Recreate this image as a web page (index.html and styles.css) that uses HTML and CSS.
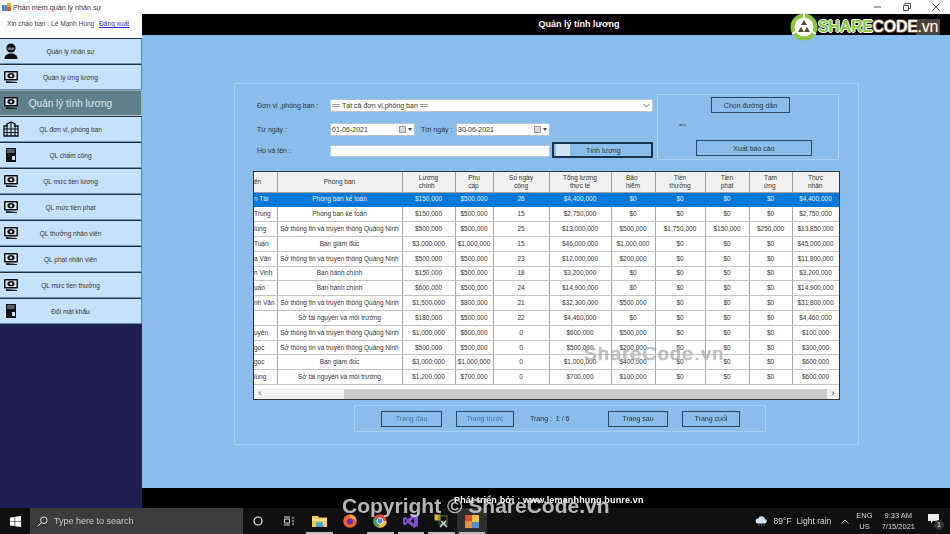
FILE: index.html
```html
<!DOCTYPE html>
<html lang="en">
<head>
    <meta charset="UTF-8">
    <meta name="viewport" content="width=device-width, initial-scale=1.0">
    <title>Phần mềm quản lý nhân sự</title>
    <link rel="stylesheet" href="styles.css">
</head>
<body>
    <svg class="defs" width="0" height="0">
        <symbol id="i-money" viewBox="0 0 16 14">
            <path d="M3 11v2h11v-1z" fill="#222"/>
            <rect x="1" y="1" width="14" height="9.5" rx="1" fill="#111"/>
            <rect x="2.5" y="2.5" width="11" height="6.5" fill="#dfeaf5"/>
            <ellipse cx="8" cy="5.7" rx="3.6" ry="2.6" fill="#111"/>
            <circle cx="8" cy="5.7" r="1.2" fill="#dfeaf5"/>
        </symbol>
        <symbol id="i-person" viewBox="0 0 16 16">
            <circle cx="8" cy="5" r="4.6" fill="#111"/>
            <path d="M4.5 4.5h7v1.6c-1 1.6-6 1.6-7 0z" fill="#c5e0ff" opacity=".5"/>
            <path d="M1.5 16c0-4 3-5.500 6.500-5.500s6.500 1.500 6.500 5.500z" fill="#111"/>
        </symbol>
        <symbol id="i-building" viewBox="0 0 16 16">
            <path d="M1 5h3V3l4-2 4 2v2h3v10H1z" fill="none" stroke="#111" stroke-width="1.300"/>
            <path d="M4 3.500V15M12 3.500V15M1 8h14M1 11.500h14M8 1v14" stroke="#111" stroke-width="1.100"/>
        </symbol>
        <symbol id="i-book" viewBox="0 0 16 16">
            <path d="M3 1h10v14H3z" fill="#111"/>
            <path d="M4 3h7.500M4 5h7.500" stroke="#c5e0ff" stroke-width=".8"/>
            <rect x="9" y="9" width="3" height="4" fill="#c5e0ff"/>
        </symbol>
    </svg>

    <div class="titlebar">
        <svg class="app-icon" width="10" height="10" viewBox="0 0 10 10">
            <rect x="0" y="3" width="5" height="6" fill="#4f8fd0"/>
            <rect x="5" y="1" width="4" height="4" fill="#e9b23c"/>
            <rect x="5" y="5" width="4" height="4" fill="#d9573c"/>
        </svg>
        <span class="app-name">Phần mềm quản lý nhân sự</span>
        <div class="win-controls">
            <span class="win-btn">
                <svg width="8" height="8" viewBox="0 0 8 8"><path d="M0 4h7" stroke="#555"/></svg>
            </span>
            <span class="win-btn">
                <svg width="8" height="8" viewBox="0 0 8 8"><path d="M.5 2.500h5v5h-5zM2 2.500V.5h5.500v5H5.500" fill="none" stroke="#555"/></svg>
            </span>
            <span class="win-btn">
                <svg width="8" height="8" viewBox="0 0 8 8"><path d="M.5.5l7 7M7.500.5l-7 7" stroke="#555"/></svg>
            </span>
        </div>
    </div>

    <div class="app">
        <aside class="sidebar">
            <div class="greeting">Xin chào bạn : Lê Mạnh Hùng <a class="logout">Đăng xuất</a></div>
            <div class="menu-item"><svg class="menu-icon"><use href="#i-person"/></svg><span>Quản lý nhân sự</span></div>
            <div class="menu-item"><svg class="menu-icon"><use href="#i-money"/></svg><span>Quản lý ứng lương</span></div>
            <div class="menu-item active"><svg class="menu-icon"><use href="#i-money"/></svg><span>Quản lý tính lương</span></div>
            <div class="menu-item"><svg class="menu-icon"><use href="#i-building"/></svg><span>QL đơn vị, phòng ban</span></div>
            <div class="menu-item"><svg class="menu-icon"><use href="#i-book"/></svg><span>QL chấm công</span></div>
            <div class="menu-item"><svg class="menu-icon"><use href="#i-money"/></svg><span>QL mức tiền lương</span></div>
            <div class="menu-item"><svg class="menu-icon"><use href="#i-money"/></svg><span>QL mức tiền phạt</span></div>
            <div class="menu-item"><svg class="menu-icon"><use href="#i-money"/></svg><span>QL thưởng nhân viên</span></div>
            <div class="menu-item"><svg class="menu-icon"><use href="#i-money"/></svg><span>QL phạt nhân viên</span></div>
            <div class="menu-item"><svg class="menu-icon"><use href="#i-money"/></svg><span>QL mức tiền thưởng</span></div>
            <div class="menu-item"><svg class="menu-icon"><use href="#i-book"/></svg><span>Đổi mật khẩu</span></div>
        </aside>

        <main class="main">
            <div class="main-header">Quản lý tính lương</div>
            <div class="content">
                <section class="panel">
                    <div class="top">
                        <div class="filters">
                            <div class="row row-unit">
                                <label class="lbl">Đơn vị ,phòng ban :</label>
                                <div class="field field-unit">== Tất cả đơn vị,phòng ban ==
                                    <svg class="chev" width="7" height="5" viewBox="0 0 7 5"><path d="M.5 1l3 3 3-3" fill="none" stroke="#666"/></svg>
                                </div>
                            </div>
                            <div class="row row-date">
                                <label class="lbl">Từ ngày :</label>
                                <div class="field field-date from">01-06-2021<span class="cal"></span><span class="caret"></span></div>
                                <label class="lbl lbl-to">Tới ngày :</label>
                                <div class="field field-date to">30-06-2021<span class="cal"></span><span class="caret"></span></div>
                            </div>
                            <div class="row row-name">
                                <label class="lbl">Họ và tên :</label>
                                <div class="field field-name"></div>
                                <button class="btn btn-calc"><span class="btn-img"></span><span class="btn-text">Tính lương</span></button>
                            </div>
                        </div>
                        <div class="export">
                            <button class="btn btn-path">Chọn đường dẫn</button>
                            <div class="arrow">=&gt;</div>
                            <button class="btn btn-export">Xuất báo cáo</button>
                        </div>
                    </div>

                    <div class="grid-wrap">
                        <table class="grid">
                            <colgroup>
                                <col class="c1"><col class="c2"><col class="c3"><col class="c4"><col class="c5"><col class="c6">
                                <col class="c7"><col class="c8"><col class="c9"><col class="c10"><col class="c11">
                            </colgroup>
                            <thead>
                                <tr>
                                    <th class="name">ên</th>
                                    <th>Phòng ban</th>
                                    <th><span class="hl">Lương<br>chính</span></th>
                                    <th><span class="hl">Phụ<br>cấp</span></th>
                                    <th>Số ngày<br>công</th>
                                    <th>Tổng lương<br>thực tế</th>
                                    <th><span class="hl">Bảo<br>hiểm</span></th>
                                    <th>Tiền<br>thưởng</th>
                                    <th><span class="hl">Tiền<br>phạt</span></th>
                                    <th><span class="hl">Tạm<br>ứng</span></th>
                                    <th><span class="hl">Thực<br>nhận</span></th>
                                </tr>
                            </thead>
                            <tbody>
                                <tr class="selected"><td class="name">n Tài</td><td>Phòng ban kế toán</td><td>$150,000</td><td>$500,000</td><td>26</td><td>$4,400,000</td><td>$0</td><td>$0</td><td>$0</td><td>$0</td><td>$4,400,000</td></tr>
                                <tr><td class="name">Trung</td><td>Phòng ban kế toán</td><td>$150,000</td><td>$500,000</td><td>15</td><td>$2,750,000</td><td>$0</td><td>$0</td><td>$0</td><td>$0</td><td>$2,750,000</td></tr>
                                <tr><td class="name">lùng</td><td>Sở thông tin và truyền thông Quảng Ninh</td><td>$500,000</td><td>$500,000</td><td>25</td><td>$13,000,000</td><td>$500,000</td><td>$1,750,000</td><td>$150,000</td><td>$250,000</td><td>$13,850,000</td></tr>
                                <tr><td class="name">Tuấn</td><td>Ban giám đốc</td><td>$3,000,000</td><td>$1,000,000</td><td>15</td><td>$46,000,000</td><td>$1,000,000</td><td>$0</td><td>$0</td><td>$0</td><td>$45,000,000</td></tr>
                                <tr><td class="name">a Văn</td><td>Sở thông tin và truyền thông Quảng Ninh</td><td>$500,000</td><td>$500,000</td><td>23</td><td>$12,000,000</td><td>$200,000</td><td>$0</td><td>$0</td><td>$0</td><td>$11,800,000</td></tr>
                                <tr><td class="name">n Vinh</td><td>Ban hành chính</td><td>$150,000</td><td>$500,000</td><td>18</td><td>$3,200,000</td><td>$0</td><td>$0</td><td>$0</td><td>$0</td><td>$3,200,000</td></tr>
                                <tr><td class="name">uấn</td><td>Ban hành chính</td><td>$600,000</td><td>$500,000</td><td>24</td><td>$14,900,000</td><td>$0</td><td>$0</td><td>$0</td><td>$0</td><td>$14,900,000</td></tr>
                                <tr><td class="name">nh Văn</td><td>Sở thông tin và truyền thông Quảng Ninh</td><td>$1,500,000</td><td>$800,000</td><td>21</td><td>$32,300,000</td><td>$500,000</td><td>$0</td><td>$0</td><td>$0</td><td>$31,800,000</td></tr>
                                <tr><td class="name"></td><td>Sở tài nguyên và môi trường</td><td>$180,000</td><td>$500,000</td><td>22</td><td>$4,460,000</td><td>$0</td><td>$0</td><td>$0</td><td>$0</td><td>$4,460,000</td></tr>
                                <tr><td class="name">uyên</td><td>Sở thông tin và truyền thông Quảng Ninh</td><td>$1,000,000</td><td>$600,000</td><td>0</td><td>$600,000</td><td>$500,000</td><td>$0</td><td>$0</td><td>$0</td><td>$100,000</td></tr>
                                <tr><td class="name">gọc</td><td>Sở thông tin và truyền thông Quảng Ninh</td><td>$500,000</td><td>$500,000</td><td>0</td><td>$500,000</td><td>$200,000</td><td>$0</td><td>$0</td><td>$0</td><td>$300,000</td></tr>
                                <tr><td class="name">gọc</td><td>Ban giám đốc</td><td>$3,000,000</td><td>$1,000,000</td><td>0</td><td>$1,000,000</td><td>$400,000</td><td>$0</td><td>$0</td><td>$0</td><td>$600,000</td></tr>
                                <tr><td class="name">lùng</td><td>Sở tài nguyên và môi trường</td><td>$1,200,000</td><td>$700,000</td><td>0</td><td>$700,000</td><td>$100,000</td><td>$0</td><td>$0</td><td>$0</td><td>$600,000</td></tr>
                            </tbody>
                        </table>
                        <div class="hscroll">
                            <span class="sb-arrow">&lsaquo;</span>
                            <span class="sb-gap"></span>
                            <span class="sb-thumb"></span>
                            <span class="sb-arrow">&rsaquo;</span>
                        </div>
                    </div>

                    <div class="pager">
                        <button class="btn pg pg-first muted">Trang đầu</button>
                        <button class="btn pg pg-prev muted">Trang trước</button>
                        <span class="pg-info">Trang :&nbsp; 1 / 6</span>
                        <button class="btn pg pg-next">Trang sau</button>
                        <button class="btn pg pg-last">Trang cuối</button>
                    </div>
                </section>
            </div>
            <div class="main-footer">Phát triển bởi : www.lemanhhung.bunre.vn</div>
        </main>
    </div>

    <footer class="taskbar">
        <span class="tb-start">
            <svg width="11" height="11" viewBox="0 0 11 11"><path d="M0 1.600l4.600-.7v4.300H0zM5.200.8L11 0v5.200H5.200zM0 5.800h4.600v4.300L0 9.400zM5.200 5.800H11V11l-5.800-.8z" fill="#fff"/></svg>
        </span>
        <div class="tb-search">
            <svg width="11" height="11" viewBox="0 0 11 11"><circle cx="6.800" cy="4.200" r="3.300" fill="none" stroke="#ddd"/><path d="M4.400 6.600L.8 10.200" stroke="#ddd"/></svg>
            <span>Type here to search</span>
        </div>
        <span class="tb-slot cortana">
            <svg width="10" height="10" viewBox="0 0 10 10"><circle cx="5" cy="5" r="4" fill="none" stroke="#eee" stroke-width="1.200"/></svg>
        </span>
        <span class="tb-slot taskview">
            <svg width="12" height="10" viewBox="0 0 12 10"><path d="M1 1h6M1 9h6M1.500 3h5v4h-5zM10 1v2M10 4v2M10 7v2" fill="none" stroke="#ddd"/></svg>
        </span>
        <span class="tb-slot open explorer">
            <svg width="15" height="12" viewBox="0 0 15 12"><path d="M0 1h6l1 1.500h8V12H0z" fill="#f3c95b"/><path d="M0 4h15v2H0z" fill="#fbe59a"/><path d="M4 7h7v5H4z" fill="#4aa3c9"/></svg>
        </span>
        <span class="tb-slot firefox">
            <svg width="14" height="14" viewBox="0 0 14 14"><circle cx="7" cy="7" r="6.800" fill="#f0642d"/><path d="M7 1c4 0 6.500 3 6 6.500C12 4.500 9 3.500 7 4z" fill="#ffb52e"/><circle cx="7" cy="7.500" r="3.100" fill="#6a2bb8"/></svg>
        </span>
        <span class="tb-slot open chrome">
            <svg width="14" height="14" viewBox="0 0 14 14"><circle cx="7" cy="7" r="6.800" fill="#d8493b"/><path d="M7 7L1 3.600A7 7 0 0 0 6 13.800z" fill="#3ba858"/><path d="M7 7h6.800A7 7 0 0 1 6 13.800z" fill="#f4c430"/><circle cx="7" cy="7" r="3" fill="#4285f4" stroke="#eee"/></svg>
        </span>
        <span class="tb-slot open vs">
            <svg width="15" height="14" viewBox="0 0 15 14"><path d="M11 0l4 2v10l-4 2-6-5-3 2.400L0 10V4l2-1.400L5 5zM11 4.500L7.500 7l3.500 2.500zM2 5.300v3.400L3.700 7z" fill="#7a4fc9"/></svg>
        </span>
        <span class="tb-slot open tools">
            <svg width="15" height="14" viewBox="0 0 15 14"><rect x=".5" y=".5" width="6" height="6" fill="#d9b53c"/><rect x="5" y="2" width="8" height="8" fill="none" stroke="#3f7d3f"/><path d="M6 13l6-6M7 7l6 6" stroke="#ddd" stroke-width="1.600"/></svg>
        </span>
        <span class="tb-slot open current app-btn">
            <svg width="14" height="13" viewBox="0 0 14 13"><rect width="7" height="6" fill="#d6503c"/><rect x="7" width="7" height="7" fill="#f3c23c"/><rect y="6" width="7" height="7" fill="#e9913c"/><rect x="7" y="7" width="7" height="6" fill="#4f8fd0"/></svg>
        </span>
        <div class="tray">
            <svg class="weather-icon" width="13" height="10" viewBox="0 0 13 10"><path d="M3 7.500a2.500 2.500 0 0 1 .3-5A3.500 3.500 0 0 1 10 3a2.300 2.300 0 0 1 0 4.500z" fill="#cfe6f7"/><path d="M4 8.500v1M6.500 8.500v1M9 8.500v1" stroke="#6fb3e8"/></svg>
            <span class="weather">89°F&nbsp; Light rain</span>
            <svg class="tray-up" width="8" height="5" viewBox="0 0 8 5"><path d="M.5 4.500L4 1l3.500 3.500" fill="none" stroke="#ccc"/></svg>
            <span class="lang">ENG<br>US</span>
            <span class="clock">9:33 AM<br>7/15/2021</span>
            <span class="notify">
                <svg width="11" height="10" viewBox="0 0 11 10"><path d="M0 0h11v7H5L3 9.500V7H0z" fill="#eee"/></svg>
                <span class="badge">1</span>
            </span>
        </div>
    </footer>

    <!-- overlays from the image host -->
    <div class="logo">
        <svg width="28" height="28" viewBox="0 0 28 28">
            <circle cx="14" cy="14" r="13.500" fill="#8cc63f"/>
            <path d="M14 0v6M2 21l5-3M26 21l-5-3" stroke="#fff" stroke-width="2"/>
            <circle cx="14" cy="14" r="9.500" fill="#fff"/>
            <path d="M14 7l3 5h-6zM8 19l3-5 3 5zM20 19h-6l3-5z" fill="#5d4a35"/>
        </svg>
        <span class="logo-text"><span class="logo-share">SHARE</span><span class="logo-code">CODE</span><span class="logo-vn">.vn</span></span>
    </div>
    <div class="wm-center">ShareCode.vn</div>
    <div class="wm-copy">Copyright © ShareCode.vn</div>
</body>
</html>
```

FILE: styles.css
```css
* {
    box-sizing: border-box;
}

html, body {
    margin: 0;
    width: 950px;
    height: 534px;
    overflow: hidden;
}

body {
    position: relative;
    display: flex;
    flex-direction: column;
    font-family: "Liberation Sans", Arial, sans-serif;
    font-size: 7px;
    color: #333;
    background: #000;
    filter: blur(.3px);
}

.defs {
    position: absolute;
}

/* window title */
.titlebar {
    height: 14px;
    display: flex;
    align-items: center;
    background: #fff;
    padding-left: 2px;
}

.app-icon {
    margin-right: 1px;
}

.app-name {
    font-size: 7.200px;
    color: #333;
}

.win-controls {
    margin-left: auto;
    display: flex;
}

.win-btn {
    width: 29px;
    height: 12px;
    display: flex;
    align-items: center;
    justify-content: center;
}

.app {
    height: 494px;
    display: flex;
}

/* left menu */
.sidebar {
    width: 142px;
    background: #1e1e50;
    flex-shrink: 0;
}

.greeting {
    height: 24px;
    background: #fff;
    padding: 6px 0 0 7px;
    font-size: 6.600px;
    color: #444;
    white-space: nowrap;
}

.logout {
    margin-left: 3px;
    color: #2a2ad0;
    text-decoration: underline;
}

.menu-item {
    height: 26px;
    display: grid;
    grid-template-columns: 1fr;
    align-items: center;
    position: relative;
    background: #c6e1ff;
    border-top: 1px solid #1f3144;
    border-right: 1px solid #5d86ad;
    border-bottom: 1px solid #6c90b2;
    text-align: center;
    font-size: 6.500px;
    color: #333;
}

.menu-item.active {
    background: #5f7f8b;
    color: #dbe8ec;
    font-size: 10px;
    border-top-color: #8fa8b2;
    border-bottom-color: #b4c6cc;
    border-right-color: #9cb3bc;
}

.menu-icon {
    position: absolute;
    left: 3px;
    top: 4px;
    width: 16px;
    height: 16px;
}

/* main area */
.main {
    flex: 1;
    display: flex;
    flex-direction: column;
    background: #88bdec;
}

.main-header {
    height: 21px;
    background: #000;
    color: #fff;
    font-size: 9px;
    font-weight: bold;
    text-align: center;
    line-height: 20px;
    padding-left: 66px;
}

.content {
    flex: 1;
    padding: 48px 91px 43px 92px;
}

.main-footer {
    height: 20px;
    background: #000;
    color: #fff;
    font-size: 9px;
    font-weight: bold;
    letter-spacing: .15px;
    padding: 8px 0 0 312px;
    line-height: 9px;
}

.panel {
    height: 362px;
    border: 1px solid #a6d0f4;
}

.top {
    display: flex;
    gap: 4px;
    padding: 10px 0 0 22px;
    height: 76px;
}

.filters {
    width: 396px;
    padding-top: 5px;
}

.row {
    display: flex;
    align-items: center;
}

.row-date {
    margin-top: 11px;
}

.row-name {
    margin-top: 6px;
    height: 16px;
}

.lbl {
    width: 73px;
    font-size: 7px;
    color: #333;
}

.lbl-to {
    width: 35px;
    margin-left: 6px;
}

.field {
    height: 13px;
    background: #fff;
    border: 1px solid #b8c4cf;
    font-size: 7px;
    line-height: 11px;
    padding-left: 1px;
    color: #333;
    display: flex;
    align-items: center;
}

.field-unit {
    width: 323px;
    justify-content: space-between;
}

.chev {
    margin-right: 2px;
}

.field-date.from {
    width: 85px;
}

.field-date.to {
    width: 94px;
}

.cal {
    width: 7px;
    height: 7px;
    margin-left: auto;
    background: #d8d8d8;
    border: 1px solid #999;
}

.caret {
    width: 0;
    height: 0;
    margin: 0 2px;
    border: 2px solid transparent;
    border-top: 3px solid #444;
    border-bottom: 0;
}

.field-name {
    width: 220px;
    height: 12px;
    margin-top: 2px;
}

.btn {
    font-family: inherit;
    font-size: 7px;
    color: #333;
    background: transparent;
    border: 1px solid #274a6b;
    padding: 0;
    display: block;
}

.btn-calc {
    width: 101px;
    height: 16px;
    margin-left: 2px;
    border: 2px solid #17324c;
    display: flex;
    align-items: center;
}

.btn-img {
    width: 14px;
    height: 12px;
    margin-left: 2px;
    background: #cfe3f5;
}

.btn-text {
    margin-left: 16px;
}

.export {
    width: 182px;
    height: 66px;
    border: 1px solid #a6d0f4;
    position: relative;
}

.btn-path {
    width: 79px;
    height: 16px;
    margin: 2px 0 0 53px;
}

.arrow {
    margin: 9px 0 0 21px;
    height: 8px;
    font-size: 6px;
}

.btn-export {
    width: 116px;
    height: 16px;
    margin: 10px 0 0 38px;
}

/* data grid */
.grid-wrap {
    width: 587px;
    height: 229px;
    margin: 11px 0 0 18px;
    background: #fff;
    border: 1px solid #333;
    overflow: hidden;
}

.grid {
    table-layout: fixed;
    width: 585px;
    border-collapse: collapse;
    font-size: 6.500px;
}

.c1 { width: 23px; }
.c2 { width: 125px; }
.c3 { width: 53px; }
.c4 { width: 38px; }
.c5 { width: 56px; }
.c6 { width: 62px; }
.c7 { width: 44px; }
.c8 { width: 50px; }
.c9 { width: 44px; }
.c10 { width: 43px; }
.c11 { width: 47px; }

.grid th {
    height: 20px;
    background: #f0f0f0;
    font-weight: normal;
    line-height: 8px;
    border-right: 1px solid #a0a0a0;
    border-bottom: 1px solid #a0a0a0;
    padding: 0;
    overflow: hidden;
    white-space: nowrap;
}

.hl {
    display: inline-block;
    text-align: left;
}

.grid td {
    height: 14.82px;
    padding: 0;
    text-align: center;
    border-right: 1px solid #a8a8a8;
    border-bottom: 1px solid #c4c4c4;
    overflow: hidden;
    white-space: nowrap;
    line-height: 8px;
}

.grid .name {
    text-align: left;
}

.grid tr.selected td {
    background: #0078d7;
    color: #e8f2fb;
    border-right-color: #0078d7;
    border-bottom-color: #0078d7;
}

.hscroll {
    display: flex;
    height: 10px;
    margin-top: 4px;
    background: #f0f0f0;
    font-size: 9px;
    line-height: 9px;
    color: #444;
}

.sb-arrow {
    width: 12px;
    text-align: center;
}

.sb-gap {
    width: 78px;
}

.sb-thumb {
    flex: 1;
    background: #cdcdcd;
}

/* paging */
.pager {
    width: 412px;
    height: 27px;
    margin: 5px 0 0 119px;
    border: 1px solid #a6d0f4;
    display: flex;
    align-items: center;
    padding-left: 26px;
}

.pg {
    height: 16px;
    flex-shrink: 0;
}

.pg-first { width: 61px; }
.pg-prev { width: 58px; margin-left: 14px; }
.pg-info { width: 78px; margin-left: 16px; }
.pg-next { width: 60px; }
.pg-last { width: 58px; margin-left: 14px; }

.muted {
    color: #4c7a9f;
}

/* taskbar */
.taskbar {
    height: 26px;
    display: flex;
    align-items: center;
    background: #101010;
    color: #ddd;
}

.tb-start {
    width: 30px;
    display: flex;
    justify-content: center;
}

.tb-search {
    width: 213px;
    height: 26px;
    background: #3c3c3c;
    display: flex;
    align-items: center;
    gap: 6px;
    padding-left: 7px;
    font-size: 9px;
    color: #c8c8c8;
}

.tb-slot {
    height: 26px;
    width: 30.500px;
    display: flex;
    align-items: center;
    justify-content: center;
    flex-shrink: 0;
    position: relative;
}

.tb-slot.open::after {
    content: "";
    position: absolute;
    left: 2px;
    right: 2px;
    bottom: 0;
    height: 2px;
    background: #bbb;
}

.tb-slot.current {
    background: #2e2e2e;
}

.tray {
    margin-left: auto;
    display: flex;
    align-items: center;
    height: 26px;
    font-size: 8px;
    color: #d8d8d8;
}

.weather {
    margin: 0 0 0 6px;
    font-size: 8.500px;
}

.tray-up {
    margin-left: 10px;
}

.lang,
.clock {
    text-align: center;
    line-height: 11px;
    font-size: 7.500px;
}

.lang {
    margin-left: 7px;
}

.clock {
    margin-left: 9px;
}

.notify {
    position: relative;
    width: 22px;
    margin: 0 0 0 13px;
    height: 14px;
}

.badge {
    position: absolute;
    left: 6px;
    top: 6px;
    width: 10px;
    height: 10px;
    border-radius: 50%;
    background: #333;
    color: #eee;
    font-size: 7px;
    line-height: 10px;
    text-align: center;
}

/* watermarks */
.logo {
    position: absolute;
    left: 790px;
    top: 13px;
    display: flex;
    align-items: center;
}

.logo-text {
    margin-left: 0;
    padding-right: 2px;
    font-family: "Liberation Sans", sans-serif;
    font-size: 16px;
    font-weight: bold;
    letter-spacing: -.3px;
    background: linear-gradient(to right, transparent 80%, #444 80%);
    line-height: 16px;
}

.logo-share {
    color: #8cc63f;
    text-shadow: 1px 0 #fff, -1px 0 #fff, 0 1px #fff, 0 -1px #fff;
}

.logo-code,
.logo-vn {
    color: #fff;
    text-shadow: 1px 0 #6b4e2e, -1px 0 #6b4e2e, 0 1px #6b4e2e, 0 -1px #6b4e2e;
}

.logo-vn {
    font-weight: normal;
}

.wm-center {
    position: absolute;
    left: 584px;
    top: 343px;
    font-size: 19px;
    letter-spacing: 1.600px;
    color: rgba(205, 205, 205, .9);
    text-shadow: 0 0 1px rgba(70, 70, 70, .8);
    white-space: nowrap;
}

.wm-copy {
    position: absolute;
    left: 342px;
    top: 494px;
    font-size: 21px;
    font-weight: bold;
    color: rgba(225, 225, 225, .8);
    white-space: nowrap;
}
```
